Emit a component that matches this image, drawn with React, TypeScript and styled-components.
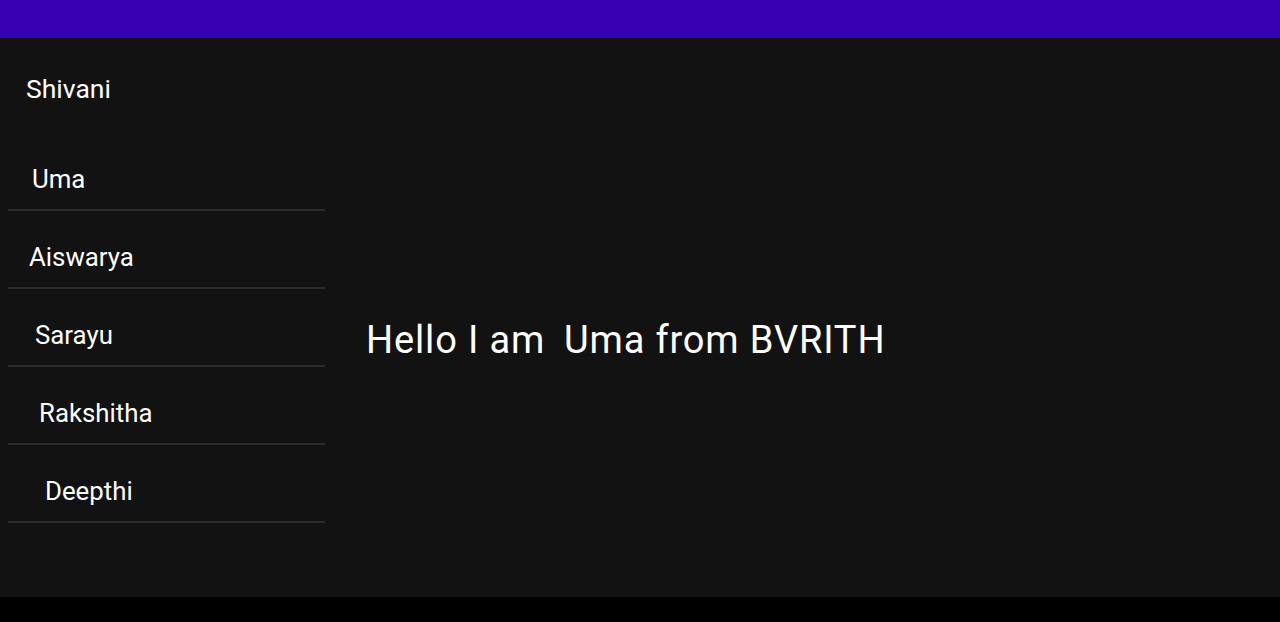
import styled, { createGlobalStyle } from 'styled-components'

const GlobalStyle = createGlobalStyle`
  html, body {
    margin: 0;
    padding: 0;
    background: #000;
  }
  body {
    font-family: Roboto, "Noto Sans", "Liberation Sans", sans-serif;
    color: #fff;
  }
`

const Screen = styled.div`
  display: flex;
  flex-direction: column;
  width: 1280px;
  height: 622px;
  overflow: hidden;
`

const AppBar = styled.header`
  height: 38px;
  flex-shrink: 0;
  background-color: #3700b3;
`

const Content = styled.main`
  display: flex;
  flex: 1;
  background-color: #121212;
`

const Sidebar = styled.nav`
  display: flex;
  flex-direction: column;
  width: 317px;
  margin-left: 8px;
  flex-shrink: 0;
`

const Title = styled.div`
  margin-top: 36px;
  margin-bottom: 29px;
  padding-left: 18px;
  font-size: 26.5px;
  line-height: 30px;
`

const Item = styled.div<{ $indent: number }>`
  padding: 32px 0 16px ${(p) => p.$indent}px;
  font-size: 25.8px;
  line-height: 28px;
  border-bottom: 2px solid #2b2b2b;
`

const Main = styled.section`
  flex: 1;
  display: flex;
  align-items: center;
  padding-left: 41px;
  padding-top: 45px;
`

const Greeting = styled.p`
  margin: 0;
  font-size: 38px;
  line-height: 44px;
  letter-spacing: 0.85px;
  white-space: pre;
`

const NavBar = styled.footer`
  height: 25px;
  flex-shrink: 0;
  background-color: #000;
`

const people = [
  { name: 'Uma', indent: 24 },
  { name: 'Aiswarya', indent: 21 },
  { name: 'Sarayu', indent: 27 },
  { name: 'Rakshitha', indent: 31 },
  { name: 'Deepthi', indent: 37 },
]

export default function App() {
  return (
    <>
      <GlobalStyle />
      <Screen>
        <AppBar />
        <Content>
          <Sidebar>
            <Title>Shivani</Title>
            {people.map((p) => (
              <Item key={p.name} $indent={p.indent}>
                {p.name}
              </Item>
            ))}
          </Sidebar>
          <Main>
            <Greeting>{'Hello I am \u2009Uma from BVRITH'}</Greeting>
          </Main>
        </Content>
        <NavBar />
      </Screen>
    </>
  )
}
